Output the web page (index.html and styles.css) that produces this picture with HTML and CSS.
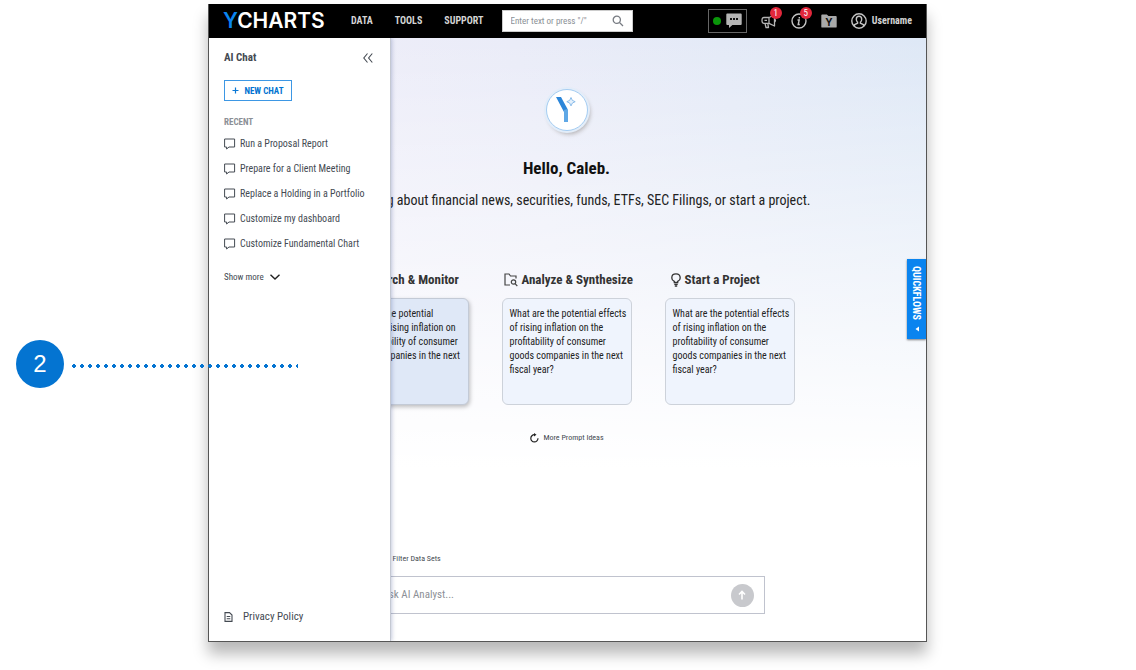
FILE: index.html
```
<!DOCTYPE html>
<html lang="en">
<head>
    <meta charset="UTF-8">
    <meta name="viewport" content="width=device-width, initial-scale=1.0">
    <title>YCharts - AI Chat</title>
    <link rel="stylesheet" href="styles.css">
</head>
<body>
    <div class="callout">
        <span class="callout-number">2</span>
        <span class="callout-line"></span>
    </div>

    <div class="window">
        <header class="topbar">
            <a href="#" class="brand"><span>Y</span>CHARTS</a>
            <nav class="nav">
                <a href="#">DATA</a>
                <a href="#">TOOLS</a>
                <a href="#">SUPPORT</a>
            </nav>
            <form class="search">
                <input type="text" aria-label="Search" placeholder='Enter text or press "/"'>
                <button type="submit" aria-label="Search">
                    <svg width="12" height="12" viewBox="0 0 12 12" fill="none" stroke="#777b82" stroke-width="1.3"><circle cx="4.8" cy="4.8" r="3.6"/><path d="M7.5 7.5L11 11"/></svg>
                </button>
            </form>
            <div class="tools">
                <button class="status" aria-label="Support chat">
                    <span class="dot"></span>
                    <svg width="16" height="16" viewBox="0 0 16 16"><path d="M1.2 0.5h13.6q.9 0 .9.9v9.6q0 .9-.9.9H6.4L3 15v-3.1H1.2q-.9 0-.9-.9V1.4q0-.9.9-.9z" fill="#b5b5b5"/><path d="M4 5h2v2H4zM7 5h2v2H7zM10 5h2v2h-2z" fill="#111"/></svg>
                </button>
                <button class="tool" aria-label="Announcements">
                    <svg width="16" height="16" viewBox="0 0 16 16" fill="none" stroke="#b5b5b5" stroke-width="1.3" stroke-linejoin="round"><path d="M8 4.500L13.500 2v11L8 10.300H3q-2 0-2-2.900t2-2.900zM8 4.500v5.800M4 10.300L5 14.500h2.500l-.7-4.200M13.500 6q2 1.500 0 3.200M3.500 7.400H6"/></svg>
                    <span class="badge">1</span>
                </button>
                <button class="tool" aria-label="Information">
                    <svg width="16" height="16" viewBox="0 0 16 16" fill="none" stroke="#c4c4c4" stroke-width="1.4"><circle cx="8" cy="8" r="7"/><path d="M6.5 7h1.7l-1 4.500h1.600M8.300 4v1.600"/></svg>
                    <span class="badge">5</span>
                </button>
                <button class="tool" aria-label="My folder">
                    <svg width="16" height="14" viewBox="0 0 16 14"><path d="M.3 1.3q0-.9.9-.9h4.600l1.700 1.700h7.300q.9 0 .9.9v9.700q0 .9-.9.9H1.200q-.9 0-.9-.9z" fill="#a9a9a9"/><text x="8" y="11.500" text-anchor="middle" class="folder-letter">Y</text></svg>
                </button>
                <button class="user">
                    <svg width="16" height="16" viewBox="0 0 16 16" fill="none" stroke="#c4c4c4" stroke-width="1.4"><circle cx="8" cy="8" r="7.2"/><path d="M8 3.300q2.700 0 2.700 2.900 0 2-1.300 3v1l3.100 1.500v1.500M8 3.300q-2.700 0-2.700 2.900 0 2 1.300 3v1l-3.100 1.500v1.500"/></svg>
                    Username
                </button>
            </div>
        </header>

        <div class="workspace">
            <main class="main">
                <div class="mark">
                    <svg width="24" height="28" viewBox="0 0 24 28"><path d="M1 1h5l6.500 12-3 4z" fill="#2b86d9"/><path d="M9 14l4-1v13H9z" fill="#5fa8e6"/><path d="M16 1.500q.6 3.700 4.200 4.200-3.600.6-4.200 4.200-.6-3.600-4.200-4.200 3.600-.5 4.200-4.200z" fill="#e4f0fb" stroke="#7fb6e8" stroke-width=".9"/></svg>
                </div>
                <h1>Hello, Caleb.</h1>
                <p class="intro">Ask anything about financial news, securities, funds, ETFs, SEC Filings, or start a project.</p>

                <div class="prompts">
                    <section>
                        <h2>
                            <svg width="12" height="14" viewBox="0 0 12 14" fill="none" stroke="#333" stroke-width="1.3"><circle cx="5" cy="6" r="4"/><path d="M8 9L11.500 13"/></svg>
                            Research &amp; Monitor
                        </h2>
                        <button class="card active">What are the potential effects of rising inflation on the profitability of consumer goods companies in the next fiscal year?</button>
                    </section>
                    <section>
                        <h2>
                            <svg width="14" height="14" viewBox="0 0 14 14" fill="none" stroke="#444" stroke-width="1.2"><path d="M6 12H1V1h4l1.500 2H12v2.500"/><circle cx="9.500" cy="9" r="2.200"/><path d="M11 10.700L13.300 13"/></svg>
                            Analyze &amp; Synthesize
                        </h2>
                        <button class="card">What are the potential effects of rising inflation on the profitability of consumer goods companies in the next fiscal year?</button>
                    </section>
                    <section>
                        <h2>
                            <svg width="10" height="14" viewBox="0 0 10 14" fill="none" stroke="#333" stroke-width="1.3"><path d="M3.300 9.500V8.400Q.8 7.200.8 4.900.8.800 5 .8t4.200 4.100q0 2.300-2.500 3.500v1.100zM3.300 11.300h3.400M3.800 13h2.400"/></svg>
                            Start a Project
                        </h2>
                        <button class="card">What are the potential effects of rising inflation on the profitability of consumer goods companies in the next fiscal year?</button>
                    </section>
                </div>

                <button class="more">
                    <svg width="10" height="10" viewBox="0 0 10 10"><path d="M5.500 1.700A3.600 3.600 0 1 0 9 5.300" fill="none" stroke="#222" stroke-width="1.2"/><path d="M5 0l2.500 1.700L5 3.400z" fill="#222"/></svg>
                    More Prompt Ideas
                </button>

                <form class="composer">
                    <button type="button" class="filter">
                        <svg width="12" height="10" viewBox="0 0 12 10" stroke="#444" fill="none"><path d="M0 2h12M2 5h8M4 8h4"/></svg>
                        Filter Data Sets
                    </button>
                    <div class="ask">
                        <input type="text" aria-label="Ask AI Analyst" placeholder="Ask AI Analyst...">
                        <button type="submit" aria-label="Send">
                            <svg width="8" height="10" viewBox="0 0 8 10" fill="none" stroke="#fff" stroke-width="1.6"><path d="M4 9.500V1.500M1 4.500l3-3 3 3"/></svg>
                        </button>
                    </div>
                </form>
            </main>

            <aside class="drawer">
                <div class="drawer-head">
                    <h3>AI Chat</h3>
                    <button aria-label="Collapse">
                        <svg width="10" height="10" viewBox="0 0 10 10" fill="none" stroke="#444a52" stroke-width="1.1"><path d="M4.500.5L.8 5l3.700 4.500M9.300.5L5.600 5l3.700 4.500"/></svg>
                    </button>
                </div>
                <button class="new-chat">
                    <svg width="7" height="7" viewBox="0 0 7 7" stroke="#0a78d6" stroke-width="1.2"><path d="M3.500.5v6M.5 3.500h6"/></svg>
                    NEW CHAT
                </button>
                <h4>RECENT</h4>
                <ul class="recent">
                    <li><a href="#"><svg width="12" height="12" viewBox="0 0 12 12"><path d="M.6 1h10v8H5L2.600 11V9h-2z"/></svg>Run a Proposal Report</a></li>
                    <li><a href="#"><svg width="12" height="12" viewBox="0 0 12 12"><path d="M.6 1h10v8H5L2.600 11V9h-2z"/></svg>Prepare for a Client Meeting</a></li>
                    <li><a href="#"><svg width="12" height="12" viewBox="0 0 12 12"><path d="M.6 1h10v8H5L2.600 11V9h-2z"/></svg>Replace a Holding in a Portfolio</a></li>
                    <li><a href="#"><svg width="12" height="12" viewBox="0 0 12 12"><path d="M.6 1h10v8H5L2.600 11V9h-2z"/></svg>Customize my dashboard</a></li>
                    <li><a href="#"><svg width="12" height="12" viewBox="0 0 12 12"><path d="M.6 1h10v8H5L2.600 11V9h-2z"/></svg>Customize Fundamental Chart</a></li>
                </ul>
                <button class="show-more">
                    Show more
                    <svg width="10" height="6" viewBox="0 0 10 6" fill="none" stroke="#222" stroke-width="1.4"><path d="M.5.7L5 5 9.500.7"/></svg>
                </button>
                <a href="#" class="privacy">
                    <svg width="9" height="10" viewBox="0 0 9 10" fill="none" stroke="#444a52" stroke-width="1.1"><path d="M1 .6h4.500L8 3v6.400H1zM2.700 4.500h3.600M2.700 6.800h3.600"/></svg>
                    Privacy Policy
                </a>
            </aside>

            <button class="quickflows">
                QUICKFLOWS
                <svg width="4" height="6" viewBox="0 0 4 6" fill="#fff"><path d="M4 .5v5L.5 3z"/></svg>
            </button>
        </div>
    </div>
</body>
</html>
```
FILE: styles.css
```
:root {
    --blue: #0474d1;
    --bright-blue: #0a84ef;
    --text-color: #444a52;
}

* {
    margin: 0;
    padding: 0;
    box-sizing: border-box;
}

body {
    font-family: "Roboto Condensed", "Liberation Sans Narrow", "Liberation Sans", sans-serif;
    font-size: 10px;
    line-height: 14px;
    color: var(--text-color);
    background-color: #fff;
    min-height: 100vh;
    padding: 4px 209px 28px 208px;
    display: flex;
}

button,
input {
    font: inherit;
    color: inherit;
    border: none;
    background: none;
}

button {
    cursor: pointer;
}

a {
    color: inherit;
    text-decoration: none;
}

svg {
    flex: none;
}

/* Callout over the window edge */
.callout {
    position: absolute;
    z-index: 5;
    left: 16px;
    top: 340px;
    display: flex;
    align-items: center;
    gap: 6px;
}

.callout-number {
    width: 48px;
    height: 48px;
    border-radius: 50%;
    background-color: var(--blue);
    color: #fff;
    font-family: "Liberation Sans", sans-serif;
    font-size: 24px;
    line-height: 48px;
    text-align: center;
}

.callout-line {
    width: 228px;
    height: 8px;
    margin-top: 4px;
    background: radial-gradient(circle, var(--blue) 1px, var(--blue) 2px, transparent 2px) 0 0 / 8px 8px;
}

.window {
    flex: 1;
    display: flex;
    flex-direction: column;
    border: 1px solid #555;
    border-top: none;
    box-shadow: 0 12px 14px rgba(0, 0, 0, 0.28);
}

/* Top bar */
.topbar {
    display: flex;
    align-items: center;
    height: 34px;
    padding: 0 14px;
    background-color: #000;
    color: #d4d4d4;
    font-weight: bold;
}

.brand {
    width: 128px;
    color: #fff;
    font-family: Inter, sans-serif;
    font-size: 21px;
    font-weight: 600;
    line-height: 34px;
}

.brand span {
    color: var(--bright-blue);
}

.nav {
    display: flex;
    gap: 22px;
    margin-right: 18px;
}

.search {
    display: flex;
    align-items: center;
    width: 131px;
    height: 22px;
    padding: 0 8px;
    background-color: #fff;
    border: 1px solid #ccc;
    font-weight: normal;
}

.search input {
    flex: 1;
    min-width: 0;
    font-size: 9px;
}

.search button {
    display: flex;
}

.search input::placeholder {
    color: #8c9096;
}

.tools {
    display: flex;
    align-items: center;
    gap: 14px;
    margin-left: auto;
}

.tools button {
    display: flex;
    align-items: center;
}

.status {
    gap: 5px;
    height: 24px;
    padding: 0 4px;
    border: 1px solid #666;
}

.dot {
    width: 8px;
    height: 8px;
    border-radius: 50%;
    background-color: #0a960a;
}

.tool {
    position: relative;
}

.badge {
    position: absolute;
    right: -5px;
    top: -6px;
    width: 12px;
    height: 12px;
    border-radius: 50%;
    background-color: #e1273b;
    color: #fff;
    font-size: 9px;
    font-weight: normal;
    line-height: 12px;
    text-align: center;
}

.folder-letter {
    font: bold 10px Inter, sans-serif;
    fill: #111;
}

.user {
    gap: 5px;
}

/* Workspace */
.workspace {
    position: relative;
    flex: 1;
    display: flex;
    overflow: hidden;
}

.main {
    flex: 1;
    display: flex;
    flex-direction: column;
    align-items: center;
    padding: 51px 22px 27px 20px;
    background: linear-gradient(180deg, rgba(255, 255, 255, 0) 0, #fff 430px), linear-gradient(80deg, #efeef9 20%, #eaecf8 50%, #dee8f6 100%);
}

.mark {
    display: flex;
    align-items: center;
    justify-content: center;
    width: 42px;
    height: 42px;
    border: 1px solid #a5cdf2;
    border-radius: 50%;
    background-color: #fff;
    box-shadow: 0 0 0 2px #e3edf9, 2px 3px 4px rgba(90, 80, 70, 0.4);
}

h1 {
    margin-top: 26px;
    color: #111;
    font-size: 17px;
    line-height: 22px;
}

.intro {
    margin-top: 11px;
    color: #222;
    font-size: 14px;
    line-height: 20px;
    white-space: nowrap;
}

.prompts {
    display: flex;
    gap: 33px;
    margin-top: 62px;
}

.prompts section {
    width: 130px;
}

.prompts h2 {
    display: flex;
    align-items: center;
    gap: 4px;
    padding-left: 2px;
    color: #333;
    font-size: 13px;
    line-height: 16px;
    white-space: nowrap;
}

.prompts section:last-child h2 {
    padding-left: 6px;
}

.card {
    display: flex;
    width: 130px;
    height: 107px;
    margin-top: 10px;
    padding: 8px 3px 8px 7px;
    border: 1px solid #cdd2da;
    border-radius: 6px;
    background-color: #eff4fd;
    color: #222;
    text-align: left;
}

.card.active {
    padding-right: 7px;
    background-color: #dfe8f7;
    border-color: #c3cad6;
    box-shadow: 1px 2px 4px rgba(0, 0, 0, 0.25);
}

.more {
    display: flex;
    align-items: center;
    gap: 4px;
    margin-top: 26px;
    font-size: 8px;
}

.composer {
    width: 396px;
    max-width: 100%;
    margin-top: auto;
}

.filter {
    display: flex;
    align-items: center;
    gap: 12px;
    margin-bottom: 10px;
    font-size: 8px;
}

.ask {
    display: flex;
    align-items: center;
    height: 38px;
    padding: 0 10px 0 13px;
    border: 1px solid #c0c3ce;
    background-color: #fff;
}

.ask input {
    flex: 1;
    min-width: 0;
    font-size: 11px;
}

.ask input::placeholder {
    color: #8c9096;
}

.ask button {
    display: flex;
    align-items: center;
    justify-content: center;
    width: 23px;
    height: 23px;
    border-radius: 50%;
    background-color: #c8c9cd;
}

/* Drawer */
.drawer {
    position: absolute;
    left: 0;
    top: 0;
    bottom: 0;
    width: 182px;
    display: flex;
    flex-direction: column;
    align-items: flex-start;
    padding: 12px 15px 16px;
    background-color: #fff;
    border-right: 1px solid #c4c8d2;
    box-shadow: 1px 0 4px rgba(60, 80, 140, 0.3);
}

.drawer-head {
    display: flex;
    align-items: center;
    justify-content: space-between;
    width: 100%;
}

.drawer-head button {
    display: flex;
    padding-right: 2px;
}

h3 {
    font-size: 11px;
    line-height: 16px;
}

.new-chat {
    display: flex;
    align-items: center;
    justify-content: center;
    gap: 5px;
    width: 68px;
    height: 21px;
    margin-top: 14px;
    border: 1px solid #3d97e4;
    color: var(--blue);
    font-size: 9px;
    font-weight: bold;
}

h4 {
    margin-top: 14px;
    color: #8c9096;
    font-size: 9px;
}

.recent {
    display: flex;
    flex-direction: column;
    gap: 11px;
    margin-top: 8px;
    list-style: none;
}

.recent a {
    display: flex;
    align-items: center;
    gap: 4px;
    white-space: nowrap;
}

.recent svg {
    fill: none;
    stroke: var(--text-color);
}

.show-more {
    display: flex;
    align-items: center;
    gap: 6px;
    margin-top: 19px;
    font-size: 9px;
}

.privacy {
    display: flex;
    align-items: center;
    gap: 10px;
    margin-top: auto;
    font-size: 11px;
    line-height: 16px;
}

.quickflows {
    position: absolute;
    right: 0;
    top: 221px;
    display: flex;
    align-items: center;
    justify-content: center;
    gap: 6px;
    height: 80px;
    width: 19px;
    background-color: var(--bright-blue);
    color: #fff;
    font-weight: bold;
    line-height: 19px;
    writing-mode: vertical-rl;
    white-space: nowrap;
    box-shadow: 0 1px 2px rgba(0, 0, 0, 0.5);
}
```
